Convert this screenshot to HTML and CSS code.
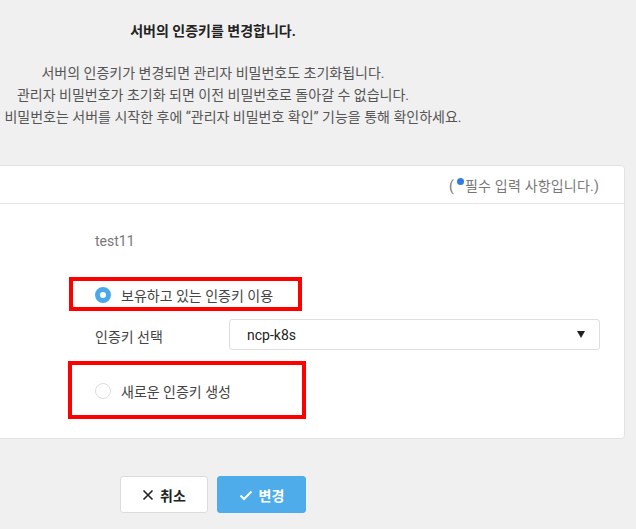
FILE: index.html
```html
<!DOCTYPE html>
<html lang="ko">
<head>
    <meta charset="UTF-8">
    <title>인증키 변경</title>
    <link rel="stylesheet" href="styles.css">
</head>
<body>
    <div class="modal">
        <h2 class="modal-title">서버의 인증키를 변경합니다.</h2>
        <div class="modal-desc">
            <p>서버의 인증키가 변경되면 관리자 비밀번호도 초기화됩니다.</p>
            <p>관리자 비밀번호가 초기화 되면 이전 비밀번호로 돌아갈 수 없습니다.</p>
            <p class="desc-last">비밀번호는 서버를 시작한 후에 “관리자 비밀번호 확인” 기능을 통해 확인하세요.</p>
        </div>

        <div class="panel">
            <div class="panel-head">
                <span class="required">(<i class="dot"></i>필수 입력 사항입니다.)</span>
            </div>
            <div class="panel-body">
                <div class="server-name">test11</div>

                <label class="radio-row marked mark-1">
                    <span class="radio checked"></span>
                    보유하고 있는 인증키 이용
                </label>

                <div class="select-row">
                    <span class="select-label">인증키 선택</span>
                    <div class="select-box">
                        <span>ncp-k8s</span>
                        <span class="caret"></span>
                    </div>
                </div>

                <label class="radio-row marked mark-2">
                    <span class="radio"></span>
                    새로운 인증키 생성
                </label>
            </div>
        </div>

        <div class="actions">
            <button class="btn btn-cancel">
                <svg width="12" height="12" viewBox="0 0 12 12"><path d="M1.5 1.5 L10.5 10.5 M10.5 1.5 L1.5 10.5" stroke="#222" stroke-width="1.6" fill="none"/></svg>
                취소
            </button>
            <button class="btn btn-ok">
                <svg width="14" height="12" viewBox="0 0 14 12"><path d="M1.5 6.5 L5 10 L12.5 2.5" stroke="#fff" stroke-width="2" fill="none"/></svg>
                변경
            </button>
        </div>
    </div>
</body>
</html>
```

FILE: styles.css
```css
* {
    box-sizing: border-box;
    margin: 0;
    padding: 0;
}

body {
    background: #f0f0f0;
    font-family: Roboto, "Noto Sans CJK KR", sans-serif;
    color: #333;
    overflow: hidden;
}

.modal {
    width: 824px;
    margin-left: -199px;
    padding-top: 20px;
    text-align: center;
}

.modal-title {
    font-size: 14px;
    font-weight: 700;
    color: #222;
    line-height: 22px;
}

.modal-desc {
    margin-top: 20px;
    font-size: 14px;
    line-height: 22px;
    color: #555;
}

/* first words of this line run off the left edge in the original */
.desc-last {
    padding-left: 40px;
}

.panel {
    margin-top: 37px;
    background: #fff;
    border: 1px solid #e2e2e2;
    border-radius: 4px;
    text-align: left;
}

.panel-head {
    height: 38px;
    border-bottom: 1px solid #e4e4e4;
    display: flex;
    align-items: center;
    justify-content: flex-end;
    padding-right: 25px;
}

.required {
    font-size: 14px;
    letter-spacing: 0.2px;
    color: #777;
}

.dot {
    display: inline-block;
    width: 7px;
    height: 7px;
    border-radius: 50%;
    background: #2f7be0;
    vertical-align: 6px;
    margin: 0 1px 0 3px;
}

.panel-body {
    padding: 27px 0 35px 293px;
}

.server-name {
    font-size: 14px;
    line-height: 20px;
    color: #777;
}

.radio-row {
    display: flex;
    align-items: center;
    gap: 10px;
    height: 24px;
    font-size: 14px;
    color: #444;
}

.marked {
    position: relative;
    width: 200px;
}

.marked::after {
    content: "";
    position: absolute;
    box-sizing: border-box;
    border: 4px solid #f00;
}

.mark-1 {
    margin-top: 32px;
}

.mark-1::after {
    left: -26px;
    top: -6px;
    width: 233px;
    height: 34px;
}

.mark-2 {
    margin-top: 29px;
}

.mark-2::after {
    left: -27px;
    top: -18px;
    width: 238px;
    height: 58px;
}

.radio {
    width: 16px;
    height: 16px;
    border-radius: 50%;
    border: 1px solid #dcdcdc;
    background: #fff;
    flex: none;
}

.radio.checked {
    border: 5px solid #4ba9e9;
}

.select-row {
    margin-top: 12px;
    display: flex;
    align-items: center;
}

.select-label {
    width: 134px;
    flex: none;
    font-size: 14px;
    color: #444;
    padding-top: 3px;
}

.select-box {
    width: 371px;
    height: 31px;
    border: 1px solid #dedede;
    border-radius: 3px;
    display: flex;
    align-items: center;
    justify-content: space-between;
    padding: 0 14px 0 17px;
    font-size: 14px;
    color: #222;
}

.caret {
    width: 0;
    height: 0;
    border-left: 4.5px solid transparent;
    border-right: 4.5px solid transparent;
    border-top: 7px solid #222;
}

.actions {
    margin-top: 37px;
    display: flex;
    justify-content: center;
    gap: 9px;
}

.btn {
    height: 37px;
    border-radius: 3px;
    font-family: Roboto, "Noto Sans CJK KR", sans-serif;
    font-size: 14px;
    font-weight: 700;
    display: flex;
    align-items: center;
    justify-content: center;
    gap: 6px;
}

.btn-cancel {
    width: 88px;
    background: #fff;
    border: 1px solid #dcdcdc;
    color: #222;
}

.btn-ok {
    width: 89px;
    background: #4dace9;
    border: 1px solid #4dace9;
    color: #fff;
}
```
